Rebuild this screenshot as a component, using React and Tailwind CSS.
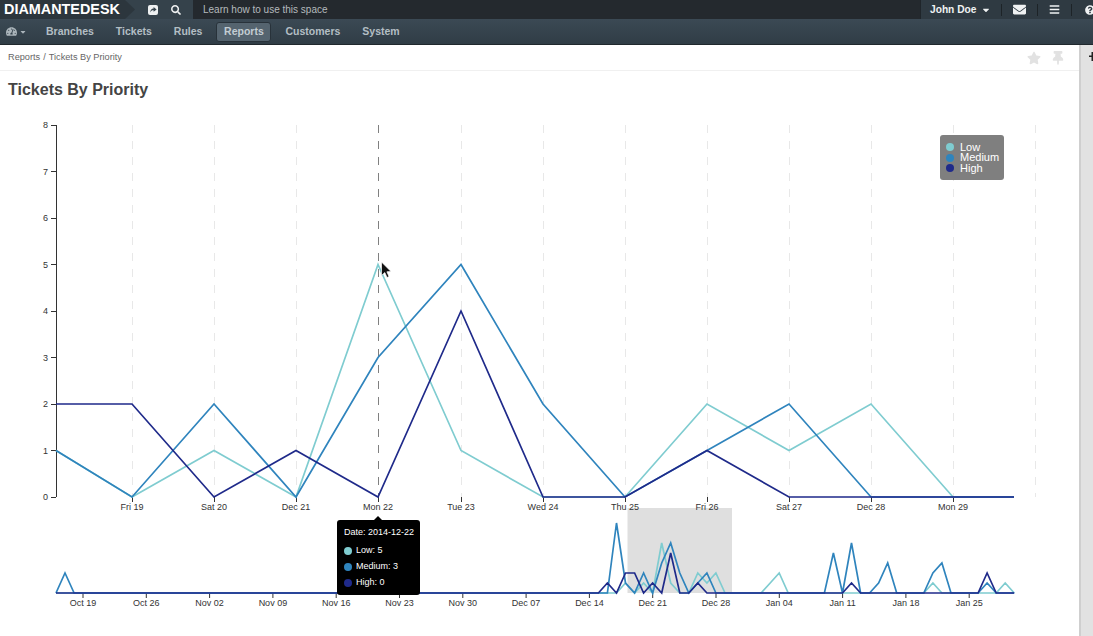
import { FaTachometerAlt, FaSearch, FaEnvelope, FaBars, FaQuestionCircle, FaStar, FaThumbtack, FaCaretDown } from 'react-icons/fa'

const LOW = '#7fccd0'
const MEDIUM = '#2f84bd'
const HIGH = '#1f2a8a'

const navItems = ['Branches', 'Tickets', 'Rules', 'Reports', 'Customers', 'System']

// main chart
const mainX = [56, 132, 214, 296, 378, 461, 543, 625, 707, 789, 871, 953, 1014]
const mainLabels = ['Fri 19', 'Sat 20', 'Dec 21', 'Mon 22', 'Tue 23', 'Wed 24', 'Thu 25', 'Fri 26', 'Sat 27', 'Dec 28', 'Mon 29']
const mainData = {
  low: [1, 0, 1, 0, 5, 1, 0, 0, 2, 1, 2, 0, 0],
  medium: [1, 0, 2, 0, 3, 5, 2, 0, 1, 2, 0, 0, 0],
  high: [2, 2, 0, 1, 0, 4, 0, 0, 1, 0, 0, 0, 0],
}
const gridX = [132, 214, 296, 378, 461, 543, 625, 707, 789, 871, 953, 1035]
const yValues = [0, 1, 2, 3, 4, 5, 6, 7, 8]

const mainY = (v) => 497 - v * 46.5
const mainPoints = (values) => values.map((v, i) => `${mainX[i]},${mainY(v)}`).join(' ')

// overview chart, one point per day starting Oct 16
const dayX = (i) => 56 + i * 9.04
const miniTicks = ['Oct 19', 'Oct 26', 'Nov 02', 'Nov 09', 'Nov 16', 'Nov 23', 'Nov 30', 'Dec 07', 'Dec 14', 'Dec 21', 'Dec 28', 'Jan 04', 'Jan 11', 'Jan 18', 'Jan 25']
const dec = (d) => d + 45
const jan = (d) => d + 76
const series = (pairs) => {
  const map = Object.fromEntries(pairs)
  return Array.from({ length: 107 }, (_, i) => `${dayX(i).toFixed(1)},${593 - (map[i] || 0) * 10}`).join(' ')
}
const miniLow = series([
  [dec(18), 1], [dec(20), 1], [dec(22), 5], [dec(23), 1], [dec(26), 2], [dec(27), 1], [dec(28), 2],
  [jan(3), 1], [jan(4), 2], [jan(21), 1], [jan(29), 1],
])
const miniMedium = series([
  [1, 2], [dec(17), 7], [dec(18), 1], [dec(20), 2], [dec(22), 3], [dec(23), 5], [dec(24), 2], [dec(26), 1], [dec(27), 2],
  [jan(10), 4], [jan(12), 5], [jan(15), 1], [jan(16), 3], [jan(21), 2], [jan(22), 3], [jan(27), 1],
])
const miniHigh = series([
  [dec(16), 1], [dec(18), 2], [dec(19), 2], [dec(21), 1], [dec(23), 4], [dec(26), 1],
  [jan(12), 1], [jan(27), 2],
])

function ShareBox() {
  return (
    <svg width="10" height="10" viewBox="0 0 10 10" className="ml-[13px] shrink-0">
      <rect width="10" height="10" rx="2" fill="#eef0f1" />
      <path d="M5.6 2 L8.6 4.4 L5.6 6.8 V5.3 C4 5.2 3 5.8 2.2 7.4 C2.2 5 3.4 3.5 5.6 3.4 Z" fill="#35424b" />
    </svg>
  )
}

function TopBar() {
  return (
    <div className="flex h-[19px] bg-[#24292e] text-white">
      <div className="flex h-full w-[193px] items-center bg-[#35424b]">
        <div className="flex h-full w-[135px] items-center bg-[#2c363d] pl-[4px] text-[14.4px] font-bold [clip-path:polygon(0_0,125px_0,135px_50%,125px_100%,0_100%)]">
          DIAMANTEDESK
        </div>
        <ShareBox />
        <FaSearch className="ml-[13px] text-[10px] text-[#eef0f1]" />
      </div>
      <div className="ml-[10px] flex flex-1 items-center text-[10px] text-[#b4babd]">Learn how to use this space</div>
      <div className="flex h-full w-[173px] items-center border-l border-[#1f252a] bg-[#2f3a42]">
        <span className="ml-[9px] whitespace-nowrap text-[10.2px] font-bold text-[#f0f2f3]">John Doe</span>
        <FaCaretDown className="ml-[5px] shrink-0 text-[10px] text-[#f0f2f3]" />
        <div className="ml-[10px] h-[12px] w-px shrink-0 bg-[#1d2327]" />
        <FaEnvelope className="ml-[11px] shrink-0 text-[13px] text-[#f0f2f3]" />
        <div className="ml-[11px] h-[12px] w-px shrink-0 bg-[#1d2327]" />
        <FaBars className="ml-[11px] shrink-0 text-[11px] text-[#f0f2f3]" />
        <div className="ml-[11px] h-[12px] w-px shrink-0 bg-[#1d2327]" />
        <FaQuestionCircle className="ml-[13px] shrink-0 text-[10px] text-[#f0f2f3]" />
      </div>
    </div>
  )
}

function NavBar() {
  return (
    <div className="flex h-[26px] items-center border-b border-[#20282d] bg-gradient-to-b from-[#3b4954] to-[#303d46] pl-[6px] text-[10.5px] font-bold text-[#b3bec4]">
      <FaTachometerAlt className="text-[11px] text-[#aab4ba]" />
      <FaCaretDown className="ml-[2px] text-[8px] text-[#aab4ba]" />
      <div className="ml-[19px] flex items-center gap-[22px]">
        {navItems.map((item) =>
          item === 'Reports' ? (
            <span
              key={item}
              className="-mx-[8px] flex h-[20px] w-[55px] items-center justify-center rounded-[3px] border border-[#28323a] bg-[#55646f] text-[#c3cdd3]"
            >
              {item}
            </span>
          ) : (
            <span key={item}>{item}</span>
          )
        )}
      </div>
    </div>
  )
}

function Chart() {
  return (
    <div className="relative">
      <svg width="1079" height="526" viewBox="0 110 1079 526" className="block" fontFamily="'Liberation Sans', Arial, sans-serif" fontSize="9" fill="#333">
        {gridX.map((x) => (
          <line key={x} x1={x + 0.5} x2={x + 0.5} y1="125" y2="497" stroke={x === 378 ? '#808080' : '#e8e8e8'} strokeDasharray="8 8" />
        ))}

        <rect x="627.5" y="508" width="104.5" height="85" fill="#dfdfdf" />

        {yValues.map((v) => (
          <g key={v}>
            <line x1="51" x2="56" y1={Math.floor(mainY(v)) + 0.5} y2={Math.floor(mainY(v)) + 0.5} stroke="#333" />
            <text x="48" y={mainY(v) + 3} textAnchor="end">{v}</text>
          </g>
        ))}
        <line x1="56.5" x2="56.5" y1="125" y2="497" stroke="#333" />
        {mainLabels.map((label, i) => (
          <g key={label}>
            <line x1={mainX[i + 1] + 0.5} x2={mainX[i + 1] + 0.5} y1="497" y2="502" stroke="#333" />
            <text x={mainX[i + 1]} y="510" textAnchor="middle">{label}</text>
          </g>
        ))}

        <polyline points={mainPoints(mainData.low)} fill="none" stroke={LOW} strokeWidth="1.7" />
        <polyline points={mainPoints(mainData.medium)} fill="none" stroke={MEDIUM} strokeWidth="1.7" />
        <polyline points={mainPoints(mainData.high)} fill="none" stroke={HIGH} strokeWidth="1.7" />

        {miniTicks.map((label, i) => {
          const x = 83 + i * 63.3
          return (
            <g key={label}>
              <line x1={x} x2={x} y1="593" y2="598" stroke="#333" />
              <text x={x} y="606" textAnchor="middle">{label}</text>
            </g>
          )
        })}
        <polyline points={miniLow} fill="none" stroke={LOW} strokeWidth="1.7" />
        <polyline points={miniMedium} fill="none" stroke={MEDIUM} strokeWidth="1.7" />
        <polyline points={miniHigh} fill="none" stroke={HIGH} strokeWidth="1.7" />

        {/* mouse pointer */}
        <path d="M381.5 262 L381.5 275.5 L384.8 272.6 L387 277.5 L389 276.6 L386.9 271.8 L391 271.5 Z" fill="#111" stroke="#fff" strokeWidth="0.7" />
      </svg>

      <div className="absolute left-[940px] top-[25px] flex h-[45px] w-[64px] flex-col justify-center rounded-[3px] bg-[#7f7f7f] pl-[6px] text-[11px] leading-[10.5px] text-white">
        <div className="flex items-center gap-[6px]"><span className="h-[8px] w-[8px] rounded-full bg-[#7fccd0]" />Low</div>
        <div className="flex items-center gap-[6px]"><span className="h-[8px] w-[8px] rounded-full bg-[#2f84bd]" />Medium</div>
        <div className="flex items-center gap-[6px]"><span className="h-[8px] w-[8px] rounded-full bg-[#1f2a8a]" />High</div>
      </div>

      <div className="absolute left-[337px] top-[410px] h-[75px] w-[83px] rounded-[3px] bg-black pl-[7px] pt-[7px] text-[9px] leading-[11px] text-white">
        <div className="absolute -top-[4px] left-[37px] h-0 w-0 border-x-[4px] border-b-[4px] border-x-transparent border-b-black" />
        <div>Date: 2014-12-22</div>
        <div className="mt-[7px] flex flex-col gap-[5px]">
          <div className="flex items-center gap-[4px]"><span className="h-[8px] w-[8px] rounded-full bg-[#7fccd0]" />Low: 5</div>
          <div className="flex items-center gap-[4px]"><span className="h-[8px] w-[8px] rounded-full bg-[#2f84bd]" />Medium: 3</div>
          <div className="flex items-center gap-[4px]"><span className="h-[8px] w-[8px] rounded-full bg-[#1f2a8a]" />High: 0</div>
        </div>
      </div>
    </div>
  )
}

export default function App() {
  return (
    <div className="h-[636px] w-[1093px] overflow-hidden bg-white font-['Liberation_Sans',Arial,sans-serif]">
      <TopBar />
      <NavBar />
      <div className="flex">
        <div className="w-[1079px]">
          <div className="flex h-[26px] items-center justify-between border-b border-[#f0f0f0] pl-[8px] pr-[14px] text-[9.2px] text-[#666]">
            <span className="flex gap-[3px]"><span>Reports</span><span>/</span><span>Tickets By Priority</span></span>
            <div className="flex items-center gap-[10px] text-[14px] text-[#e2e2e2]">
              <FaStar />
              <FaThumbtack />
            </div>
          </div>
          <h1 className="flex h-[39px] items-center pb-[2px] pl-[8px] text-[16px] font-bold text-[#444]">Tickets By Priority</h1>
          <Chart />
        </div>
        <div className="relative h-[591px] flex-1 border-l-2 border-[#cfcfcf] bg-[#e2e2e2]">
          <svg width="4" height="9" viewBox="0 0 4 9" className="absolute left-[8px] top-[7px]">
            <path d="M0 3.5 H4 V5 H0 Z M2.5 0 H4 V9 H2.5 Z" fill="#222" />
          </svg>
        </div>
      </div>
    </div>
  )
}
